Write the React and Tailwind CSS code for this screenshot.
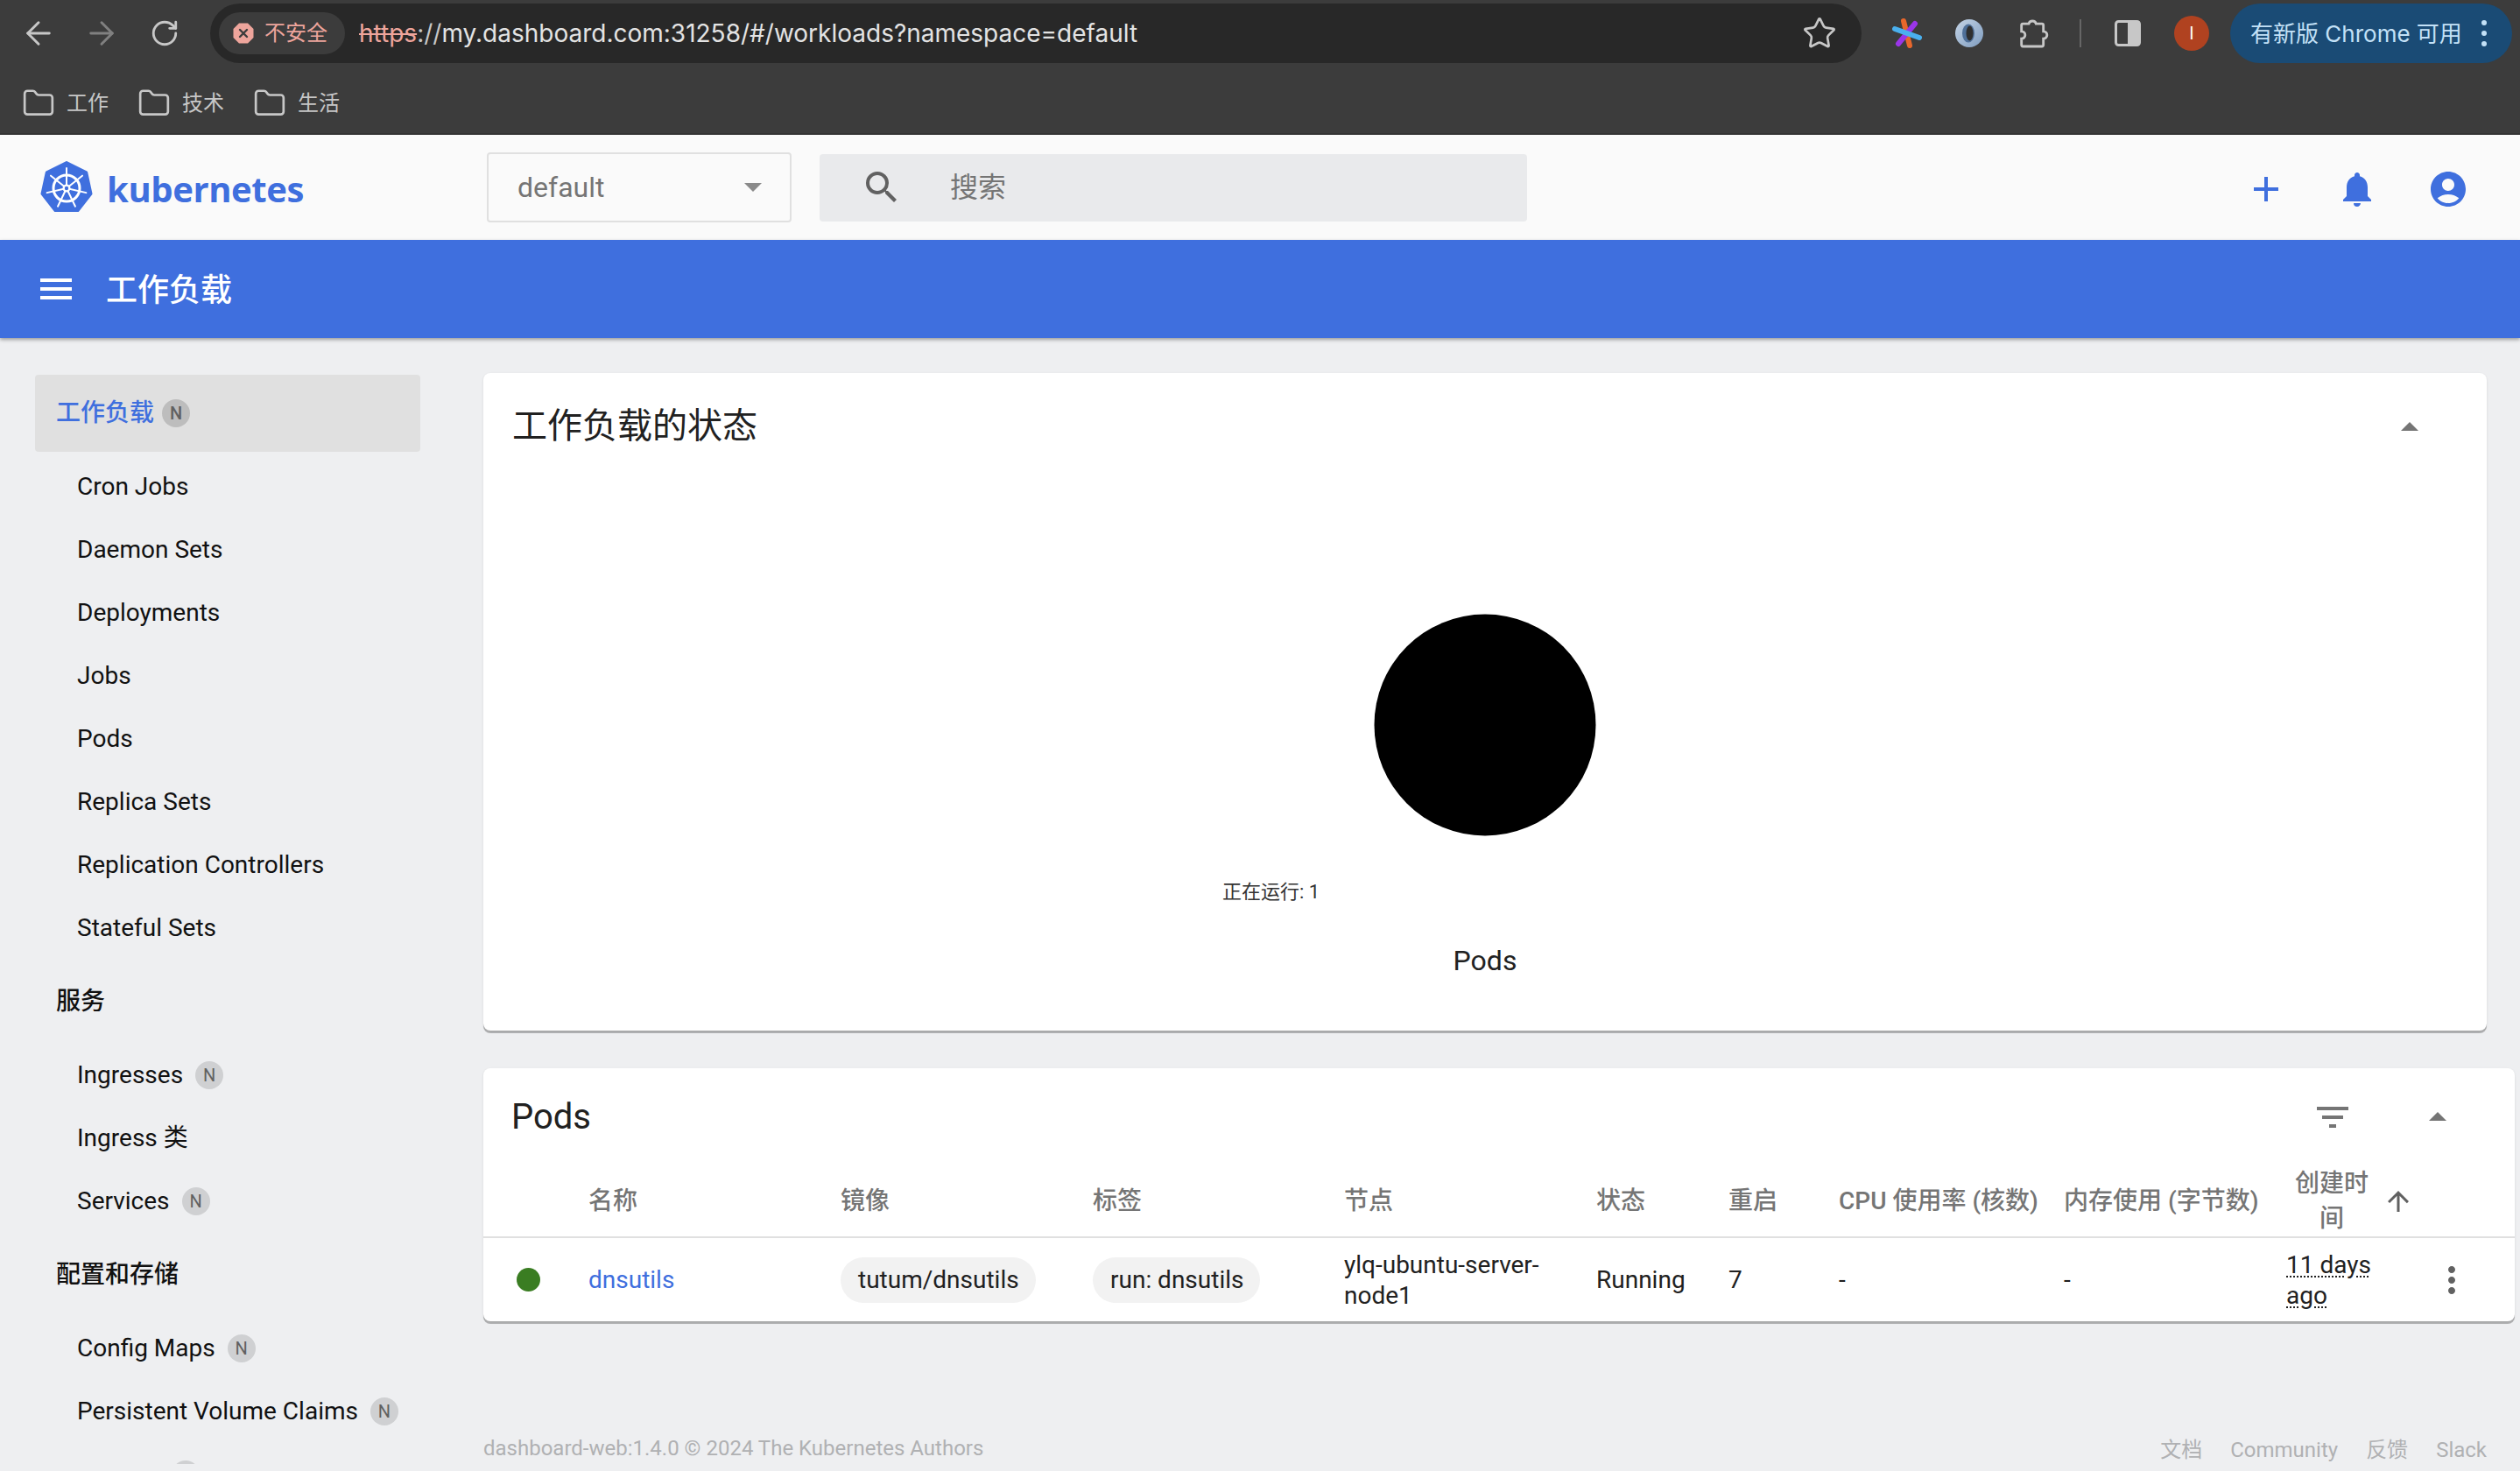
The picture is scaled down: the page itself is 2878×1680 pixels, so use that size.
import { ArrowLeft, ArrowRight, Folder, RotateCw, Star } from "lucide-react";
import {
  MdAccountCircle,
  MdAdd,
  MdArrowDropUp,
  MdArrowUpward,
  MdFilterList,
  MdMenu,
  MdMoreVert,
  MdNotifications,
  MdSearch,
} from "react-icons/md";

const workloadItems = [
  "Cron Jobs",
  "Daemon Sets",
  "Deployments",
  "Jobs",
  "Pods",
  "Replica Sets",
  "Replication Controllers",
  "Stateful Sets",
];

const spokes = [0, 1, 2, 3, 4, 5, 6].map((k) => {
  const angle = (k * 2 * Math.PI) / 7;
  return { x: 30 + 23 * Math.sin(angle), y: 31 - 23 * Math.cos(angle) };
});

function KubeLogo() {
  return (
    <svg width="60" height="60" viewBox="0 0 60 60">
      <polygon
        points="30,1.5 52.7,12.8 58,37.3 43,56.5 17,56.5 2,37.3 7.3,12.8"
        fill="#3f6fde"
        stroke="#3f6fde"
        strokeWidth="3"
        strokeLinejoin="round"
      />
      <circle cx="30" cy="31" r="15" fill="none" stroke="#fff" strokeWidth="3" />
      {spokes.map((s) => (
        <line key={s.x} x1="30" y1="31" x2={s.x} y2={s.y} stroke="#fff" strokeWidth="2" strokeLinecap="round" />
      ))}
      <circle cx="30" cy="31" r="4.5" fill="#fff" />
      <circle cx="30" cy="31" r="2.2" fill="#3f6fde" />
    </svg>
  );
}

function Pinwheel() {
  return (
    <svg width="36" height="36" viewBox="0 0 36 36" className="ml-[33px]" fill="none" strokeLinecap="round" strokeWidth="6">
      <line x1="15" y1="4" x2="22" y2="32" stroke="#e8672c" />
      <line x1="28" y1="7" x2="9" y2="30" stroke="#9a35e8" />
      <line x1="5" y1="13" x2="33" y2="23" stroke="#4ab0ee" />
    </svg>
  );
}

function RingIcon() {
  return (
    <svg width="34" height="34" viewBox="0 0 34 34" className="ml-[37px]">
      <defs>
        <linearGradient id="ringFill" x1="0" y1="0" x2="1" y2="1">
          <stop offset="0" stopColor="#c5d4e6" />
          <stop offset="1" stopColor="#7f9dc0" />
        </linearGradient>
      </defs>
      <circle cx="17" cy="17" r="16" fill="url(#ringFill)" />
      <ellipse cx="16" cy="17" rx="7" ry="10.5" fill="#4f7099" />
      <ellipse cx="17.5" cy="17" rx="4" ry="8.5" fill="#2f2f2f" />
    </svg>
  );
}

function PuzzleIcon() {
  return (
    <svg width="40" height="40" viewBox="0 0 24 24" className="ml-[36px]" fill="none" stroke="#c7c7c7" strokeWidth="1.7">
      <path d="M5 5.5h4a2.6 2.6 0 0 1 5 0h4a1 1 0 0 1 1 1v4.2a2.5 2.5 0 0 1 0 5V20a1 1 0 0 1-1 1H5a1 1 0 0 1-1-1v-4.300a2.5 2.5 0 0 0 0-5V6.500a1 1 0 0 1 1-1z" />
    </svg>
  );
}

function SidePanelIcon() {
  return (
    <svg width="30" height="30" viewBox="0 0 30 30" className="ml-[38px]">
      <rect x="1.500" y="1.500" width="27" height="27" rx="3" fill="none" stroke="#c7c7c7" strokeWidth="3" />
      <rect x="15" y="1.500" width="13.500" height="27" fill="#c7c7c7" />
    </svg>
  );
}

function InsecureIcon() {
  return (
    <svg width="24" height="24" viewBox="0 0 24 24" className="shrink-0">
      <polygon points="7,0.500 17,0.500 23.500,7 23.500,17 17,23.500 7,23.500 0.500,17 0.500,7" fill="#eea59c" />
      <path d="M8 8l8 8M16 8l-8 8" stroke="#3c3c3c" strokeWidth="2.400" strokeLinecap="round" />
    </svg>
  );
}

function ChromeBar() {
  return (
    <div className="h-[154px] shrink-0 bg-[#3c3c3c] border-b-2 border-[#343434] font-['Inter','Noto_Sans_CJK_SC',sans-serif]">
      <div className="h-[76px] pt-[4px] flex items-start">
        <div className="h-[68px] flex items-center w-[240px] shrink-0">
          <ArrowLeft size={42} strokeWidth={1.700} color="#c7c7c7" className="ml-[23px]" />
          <ArrowRight size={42} strokeWidth={1.700} color="#808080" className="ml-[30px]" />
          <RotateCw size={34} strokeWidth={2} color="#c7c7c7" className="ml-[34px]" />
        </div>
        <div className="w-[1886px] h-[68px] shrink-0 rounded-full bg-[#282828] flex items-center pl-[10px] pr-[28px]">
          <div className="h-[48px] w-[144px] shrink-0 rounded-full bg-[#3c3c3c] flex items-center pl-[16px] gap-[2px]">
            <InsecureIcon />
            <span className="text-[24px] text-[#eea59c] ml-[10px]">不安全</span>
          </div>
          <div className="ml-[16px] text-[28px] whitespace-nowrap flex-1">
            <span className="text-[#eea59c] line-through">https</span>
            <span className="text-[#c7c7c7]">://</span>
            <span className="text-[#e3e3e3]">my.dashboard.com:31258/#/workloads?namespace=default</span>
          </div>
          <Star size={40} strokeWidth={1.600} color="#c7c7c7" />
        </div>
        <div className="h-[68px] flex items-center">
          <Pinwheel />
          <RingIcon />
          <PuzzleIcon />
          <div className="ml-[33px] w-[2px] h-[32px] bg-[#666]" />
          <SidePanelIcon />
          <div className="ml-[38px] w-[40px] h-[40px] rounded-full bg-[#b04220] flex items-center justify-center text-white text-[20px]">
            I
          </div>
          <div className="ml-[24px] w-[322px] h-[68px] rounded-full bg-[#1a4b75] flex items-center pl-[23px] text-[#c3e1f7] text-[26px] whitespace-nowrap">
            有新版 Chrome 可用
            <svg width="6" height="30" viewBox="0 0 6 30" className="ml-[22px]" fill="#c3e1f7">
              <circle cx="3" cy="3" r="3" />
              <circle cx="3" cy="15" r="3" />
              <circle cx="3" cy="27" r="3" />
            </svg>
          </div>
        </div>
      </div>
      <div className="h-[74px] flex items-center pl-[25px] pt-[10px] text-[24px] text-[#c7c7c7]">
        {["工作", "技术", "生活"].map((name) => (
          <div key={name} className="flex items-center w-[132px]">
            <Folder size={38} strokeWidth={1.700} />
            <span className="ml-[13px]">{name}</span>
          </div>
        ))}
      </div>
    </div>
  );
}

function TopHeader() {
  return (
    <div className="h-[120px] shrink-0 bg-[#fafafa] flex items-center">
      <div className="ml-[46px] w-[510px] shrink-0 flex items-center">
        <KubeLogo />
        <span className="ml-[16px] pt-[3px] text-[#3f6fde] text-[40px] font-bold tracking-[-0.400px] font-['Open_Sans',sans-serif]">kubernetes</span>
      </div>
      <div className="w-[348px] h-[80px] shrink-0 border-2 border-[#e0e0e0] rounded-[4px] flex items-center justify-between pl-[33px] pr-[32px] text-[32px] text-[#757575]">
        default
        <div className="w-0 h-0 border-x-[10px] border-x-transparent border-t-[10px] border-t-[#8a8a8a]" />
      </div>
      <div className="ml-[32px] w-[808px] h-[77px] shrink-0 bg-[#e9eaec] rounded-[4px] flex items-center pl-[47px] text-[32px] text-[#757575]">
        <MdSearch size={48} color="#616161" />
        <span className="ml-[54px]">搜索</span>
      </div>
      <div className="ml-auto pr-[58px] pt-[4px] flex items-center gap-[56px] text-[#3f6fde]">
        <MdAdd size={48} />
        <MdNotifications size={48} />
        <MdAccountCircle size={48} />
      </div>
    </div>
  );
}

function NavItem({ label, badge }) {
  return (
    <div className="h-[72px] pl-[48px] flex items-center text-[28px] text-[#111]">
      {label}
      {badge && (
        <span className="ml-[14px] w-[32px] h-[32px] rounded-full bg-[#cfd0d2] flex items-center justify-center text-[20px] text-[#616161]">
          N
        </span>
      )}
    </div>
  );
}

function GroupTitle({ children }) {
  return <div className="h-[96px] pl-[24px] flex items-center text-[28px] font-medium text-[#111]">{children}</div>;
}

function Sidebar() {
  return (
    <div className="w-[552px] h-[1286px] shrink-0 overflow-hidden pl-[40px] pt-[42px]">
      <div className="w-[440px] h-[88px] mb-[4px] bg-[#e0e0e0] rounded-[4px] pl-[24px] flex items-center text-[28px] font-medium text-[#3f6fde]">
        工作负载
        <span className="ml-[9px] w-[32px] h-[32px] rounded-full bg-[#bdbdbd] flex items-center justify-center text-[20px] text-[#616161]">N</span>
      </div>
      {workloadItems.map((item) => (
        <NavItem key={item} label={item} />
      ))}
      <GroupTitle>服务</GroupTitle>
      <NavItem label="Ingresses" badge />
      <NavItem label="Ingress 类" />
      <NavItem label="Services" badge />
      <GroupTitle>配置和存储</GroupTitle>
      <NavItem label="Config Maps" badge />
      <NavItem label="Persistent Volume Claims" badge />
      <NavItem label="Secrets" badge />
    </div>
  );
}

function StatusCard() {
  return (
    <div className="w-[2288px] h-[751px] bg-white rounded-[8px] shadow-[0_3px_0_0_rgba(0,0,0,0.25),0_1px_3px_0_rgba(0,0,0,0.1)]">
      <div className="h-[118px] pl-[33px] pr-[64px] pt-[3px] flex items-center justify-between">
        <h2 className="text-[40px] text-[#212121]">工作负载的状态</h2>
        <MdArrowDropUp size={48} color="#757575" className="mt-[3px]" />
      </div>
      <div className="pt-[157px] flex flex-col">
        <svg width="254" height="254" viewBox="0 0 254 254" className="self-center">
          <circle cx="127" cy="127" r="126.500" fill="#000" />
        </svg>
        <div className="mt-[50px] ml-[844px] h-[28px] leading-[28px] text-[22px] text-[#333]">正在运行: 1</div>
        <div className="mt-[40px] text-center text-[32px] text-[#212121]">Pods</div>
      </div>
    </div>
  );
}

const podColumns = "grid grid-cols-[120px_288px_288px_287px_288px_151px_126px_257px_254px_151px_110px]";

function Chip({ children }) {
  return <span className="h-[52px] pl-[20px] pr-[19px] rounded-full bg-[#f2f2f2] inline-flex items-center whitespace-nowrap">{children}</span>;
}

function PodsCard() {
  return (
    <div className="w-[2320px] h-[289px] mt-[43px] bg-white rounded-[8px] shadow-[0_3px_0_0_rgba(0,0,0,0.25),0_1px_3px_0_rgba(0,0,0,0.1)]">
      <div className="h-[112px] pl-[32px] flex items-center">
        <h2 className="text-[40px] text-[#212121]">Pods</h2>
        <MdFilterList size={48} color="#757575" className="ml-auto" />
        <MdArrowDropUp size={48} color="#757575" className="ml-[72px] mr-[64px]" />
      </div>
      <div className={`${podColumns} h-[82px] items-center border-b-2 border-[#e0e0e0] text-[28px] font-medium text-[#757575]`}>
        <div />
        <div>名称</div>
        <div>镜像</div>
        <div>标签</div>
        <div>节点</div>
        <div>状态</div>
        <div>重启</div>
        <div className="whitespace-nowrap">CPU 使用率 (核数)</div>
        <div className="whitespace-nowrap">内存使用 (字节数)</div>
        <div className="flex items-center">
          <div className="w-[104px] text-center leading-[40px]">创建时间</div>
          <MdArrowUpward size={36} color="#616161" className="ml-[6px] shrink-0" />
        </div>
        <div />
      </div>
      <div className={`${podColumns} h-[95px] items-center text-[28px] leading-[35px] text-[#212121]`}>
        <div className="pl-[38px]">
          <div className="w-[27px] h-[27px] rounded-full bg-[#3a7d22]" />
        </div>
        <div className="text-[#3f6fde]">dnsutils</div>
        <div>
          <Chip>tutum/dnsutils</Chip>
        </div>
        <div>
          <Chip>run: dnsutils</Chip>
        </div>
        <div>ylq-ubuntu-server-node1</div>
        <div>Running</div>
        <div>7</div>
        <div>-</div>
        <div>-</div>
        <div className="w-[116px]">
          <span className="underline decoration-dotted decoration-2 underline-offset-[4px]">11 days ago</span>
        </div>
        <div className="pl-[14px]">
          <MdMoreVert size={48} color="#616161" />
        </div>
      </div>
    </div>
  );
}

function Footer() {
  return (
    <div className="w-[2288px] mt-[124px] flex items-center justify-between text-[24px] text-[#b0b1b3]">
      <span>dashboard-web:1.4.0 © 2024 The Kubernetes Authors</span>
      <div className="flex gap-[32px] pt-[5px]">
        <span>文档</span>
        <span>Community</span>
        <span>反馈</span>
        <span>Slack</span>
      </div>
    </div>
  );
}

export default function App() {
  return (
    <div className="w-[2878px] h-[1680px] overflow-hidden flex flex-col bg-[#eeeff1] font-['Roboto','Noto_Sans_CJK_SC',sans-serif]">
      <ChromeBar />
      <TopHeader />
      <div className="h-[112px] shrink-0 bg-[#3f6fde] flex items-center pl-[40px] text-white shadow-[0_2px_4px_rgba(0,0,0,0.35)] relative">
        <MdMenu size={48} />
        <span className="ml-[33px] pt-[3px] text-[36px] font-medium">工作负载</span>
      </div>
      <div className="flex flex-1 min-h-0">
        <Sidebar />
        <div className="flex-1 min-w-0 pt-[40px]">
          <StatusCard />
          <PodsCard />
          <Footer />
        </div>
      </div>
    </div>
  );
}
